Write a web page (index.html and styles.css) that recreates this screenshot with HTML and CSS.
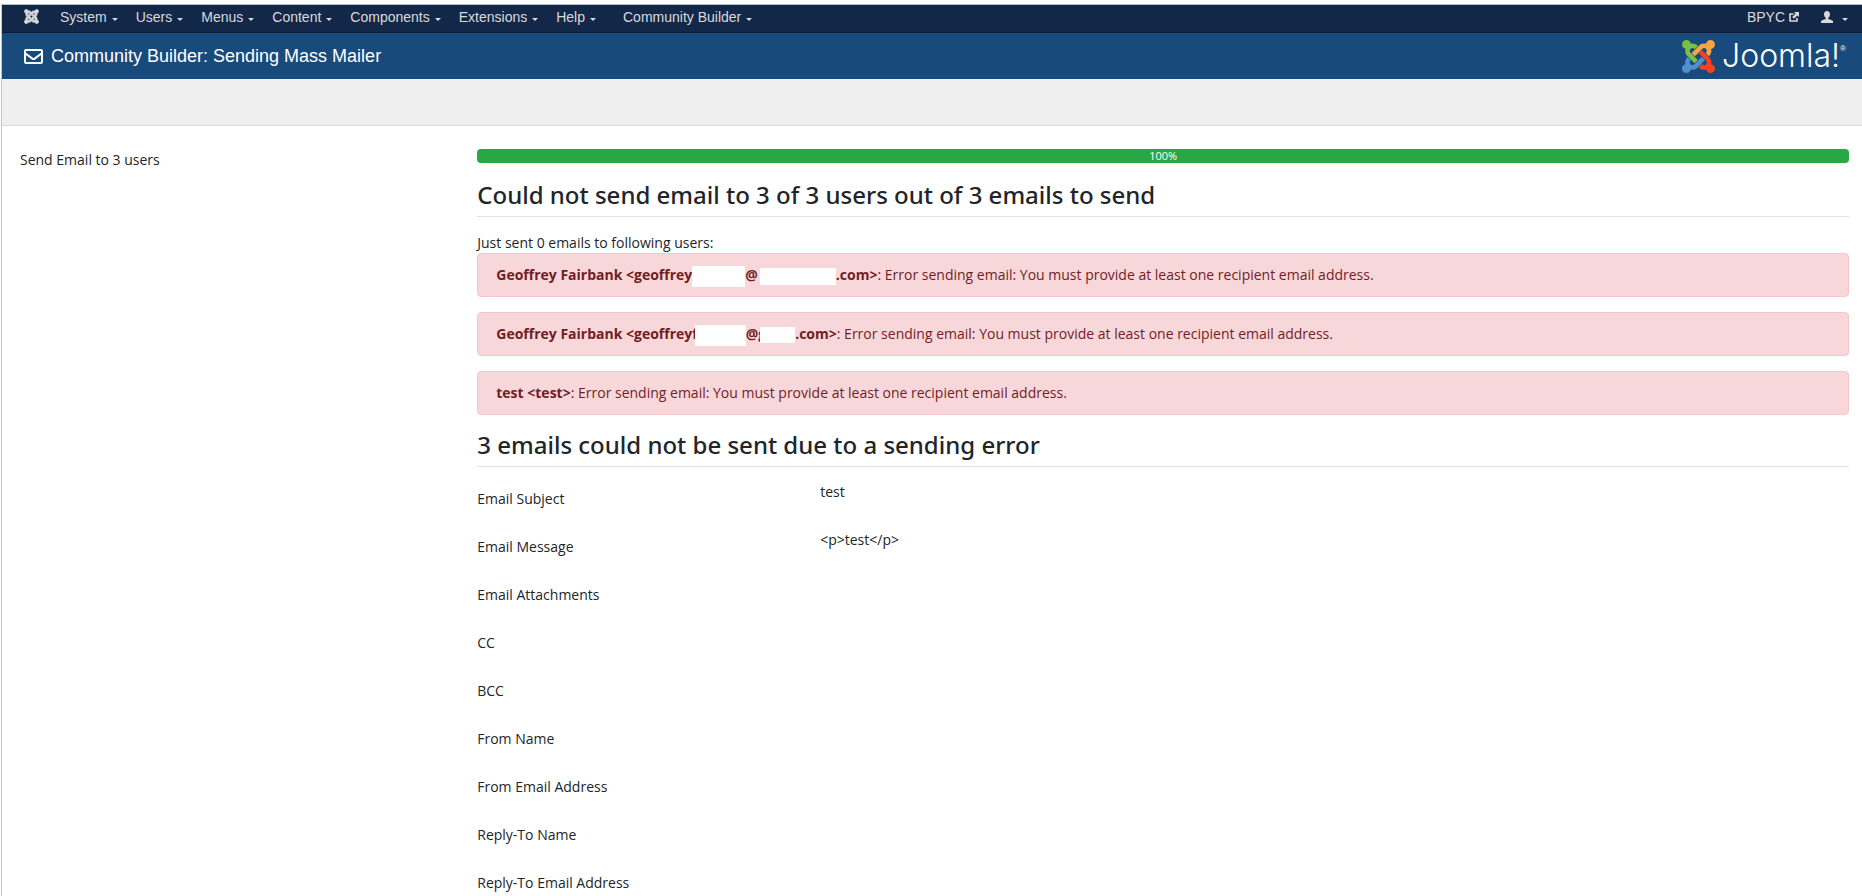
FILE: index.html
```html
<!DOCTYPE html>
<html lang="en">
<head>
<meta charset="utf-8">
<meta name="viewport" content="width=device-width, initial-scale=1">
<title>Community Builder: Sending Mass Mailer</title>
<link rel="stylesheet" href="styles.css">
</head>
<body>
<div class="frame">
  <nav class="navbar" aria-label="Administration">
    <a class="nav-brand" href="#" aria-label="Control panel">
      <svg viewBox="-12 20 472 472" aria-hidden="true"><path d="M.6 92.1C.6 58.8 27.4 32 60.4 32c30 0 54.5 21.9 59.2 50.2 32.6-7.6 67.1.6 96.5 30l-44.3 44.3c-20.5-20.5-42.6-16.3-55.4-3.5-14.3 14.3-14.3 37.9 0 52.2l99.5 99.5-44 44.3c-87.7-87.2-49.7-49.7-99.8-99.7-26.8-26.5-35-64.8-24.8-98.9C20.4 144.6.6 120.7.6 92.1zm129.5 116.4l44.3 44.3c10-10 89.7-89.7 99.7-99.8 14.3-14.3 37.6-14.3 51.9 0 12.8 12.8 17 35-3.5 55.4l44 44.3c31.2-31.2 38.5-67.6 28.9-101.2 29.2-4.1 51.9-29.2 51.9-59.5 0-33.2-26.8-60.1-59.8-60.1-30.3 0-55.4 22.5-59.5 51.6-33.8-9.9-71.7-1.5-98.3 25.1-18.3 19.1-71.1 71.5-99.6 99.9zm266.3 152.2c8.2-32.7-.9-68.5-26.3-93.9-11.8-12.2 5 4.7-99.5-99.7l-44.3 44.3 99.7 99.7c14.3 14.3 14.3 37.6 0 51.9-12.8 12.8-35 17-55.4-3.5l-44 44.3c27.6 30.2 68 38.8 102.7 28 5.5 27.4 29.7 48.1 58.9 48.1 33 0 59.8-26.8 59.8-60.1 0-30.2-22.5-55-51.6-59.1zm-84.3-53.1l-44-44.3c-87 86.4-50.4 50.4-99.7 99.8-14.3 14.3-37.6 14.3-51.9 0-13.1-13.4-16.9-35.3 3.2-55.4l-44-44.3c-30.2 30.2-38 65.2-29.5 98.3-26.7 6-46.2 29.9-46.2 58.2C0 453.2 26.8 480 59.8 480c28.6 0 52.5-19.8 58.6-46.7 32.7 8.2 68.5-.6 94.2-26 32.1-32 12.2-12.4 99.5-99.7z"/></svg>
    </a>
    <ul class="menu">
      <li><button type="button">System<span class="caret"></span></button></li>
      <li><button type="button">Users<span class="caret"></span></button></li>
      <li><button type="button">Menus<span class="caret"></span></button></li>
      <li><button type="button">Content<span class="caret"></span></button></li>
      <li><button type="button">Components<span class="caret"></span></button></li>
      <li><button type="button">Extensions<span class="caret"></span></button></li>
      <li><button type="button">Help<span class="caret"></span></button></li>
      <li class="menu-extra"><button type="button">Community Builder<span class="caret"></span></button></li>
    </ul>
    <div class="nav-right">
      <a class="site-link" href="#">BPYC
        <svg viewBox="0 0 10 10" aria-hidden="true"><path d="M4.5 2H1v7h7V6" fill="none" stroke="currentColor" stroke-width="1.6"/><path d="M5 0h5v5L8.4 3.4 5 6.8 3.2 5 6.6 1.6z"/></svg>
      </a>
      <button type="button" class="user-menu" aria-label="User menu">
        <svg viewBox="0 0 12 12" aria-hidden="true"><path d="M6 0c1.9 0 3 1.4 3 3.2 0 1.5-.7 2.9-1.7 3.6v1.1c1.9.6 4.2 1.3 4.7 2.3V12H0v-1.8c.5-1 2.8-1.7 4.7-2.3V6.8C3.7 6.1 3 4.7 3 3.2 3 1.4 4.1 0 6 0z"/></svg>
        <span class="caret"></span>
      </button>
    </div>
  </nav>

  <header class="header">
    <svg class="mail-icon" viewBox="0 0 19 15" aria-hidden="true"><rect x="1" y="1" width="17" height="13" rx="1"/><path d="M1.5 4.5 8.3 9.6q1.2.8 2.4 0L17.5 4.5"/></svg>
    <h1 class="page-title">Community Builder: Sending Mass Mailer</h1>
    <div class="logo">
      <svg viewBox="0 32 448 448" aria-hidden="true">
        <path fill="#7ac143" d="M.6 92.1C.6 58.8 27.4 32 60.4 32c30 0 54.5 21.9 59.2 50.2 32.6-7.6 67.1.6 96.5 30l-44.3 44.3c-20.5-20.5-42.6-16.3-55.4-3.5-14.3 14.3-14.3 37.9 0 52.2l99.5 99.5-44 44.3c-87.7-87.2-49.7-49.7-99.8-99.7-26.8-26.5-35-64.8-24.8-98.9C20.4 144.6.6 120.7.6 92.1z"/>
        <path fill="#f9a541" d="M130.1 208.5l44.3 44.3c10-10 89.7-89.7 99.7-99.8 14.3-14.3 37.6-14.3 51.9 0 12.8 12.8 17 35-3.5 55.4l44 44.3c31.2-31.2 38.5-67.6 28.9-101.2 29.2-4.1 51.9-29.2 51.9-59.5 0-33.2-26.8-60.1-59.8-60.1-30.3 0-55.4 22.5-59.5 51.6-33.8-9.9-71.7-1.5-98.3 25.1-18.3 19.1-71.1 71.5-99.6 99.9z"/>
        <path fill="#f44321" d="M396.4 360.7c8.2-32.7-.9-68.5-26.3-93.9-11.8-12.2 5 4.7-99.5-99.7l-44.3 44.3 99.7 99.7c14.3 14.3 14.3 37.6 0 51.9-12.8 12.8-35 17-55.4-3.5l-44 44.3c27.6 30.2 68 38.8 102.7 28 5.5 27.4 29.7 48.1 58.9 48.1 33 0 59.8-26.8 59.8-60.1 0-30.2-22.5-55-51.6-59.1z"/>
        <path fill="#5091cd" d="M312.1 307.6l-44-44.3c-87 86.4-50.4 50.4-99.7 99.8-14.3 14.3-37.6 14.3-51.9 0-13.1-13.4-16.9-35.3 3.2-55.4l-44-44.3c-30.2 30.2-38 65.2-29.5 98.3-26.7 6-46.2 29.9-46.2 58.2C0 453.2 26.8 480 59.8 480c28.6 0 52.5-19.8 58.6-46.7 32.7 8.2 68.5-.6 94.2-26 32.1-32 12.2-12.4 99.5-99.7z"/>
      </svg>
      <span class="logo-text">Joomla!</span><span class="logo-mark">®</span>
    </div>
  </header>

  <div class="subhead"></div>

  <div class="layout">
    <aside class="sidebar">Send Email to 3 users</aside>
    <main class="content">
      <div class="progress" role="progressbar" aria-label="Sending progress" aria-valuenow="100" aria-valuemin="0" aria-valuemax="100"><div class="progress-bar" style="width:100%">100%</div></div>
      <h2 class="heading">Could not send email to 3 of 3 users out of 3 emails to send</h2>
      <p class="note">Just sent 0 emails to following users:</p>
      <div class="alert" role="alert"><strong>Geoffrey Fairbank &lt;geoffrey<span class="mask mask-name"></span>@<span class="mask mask-host"></span>.com&gt;</strong>: Error sending email: You must provide at least one recipient email address.</div>
      <div class="alert" role="alert"><strong>Geoffrey Fairbank &lt;geoffreyf<span class="mask mask-name-short"></span>@g<span class="mask mask-host-short"></span>.com&gt;</strong>: Error sending email: You must provide at least one recipient email address.</div>
      <div class="alert" role="alert"><strong>test &lt;test&gt;</strong>: Error sending email: You must provide at least one recipient email address.</div>
      <h2 class="heading">3 emails could not be sent due to a sending error</h2>
      <dl class="fields">
        <div class="field"><dt>Email Subject</dt><dd>test</dd></div>
        <div class="field"><dt>Email Message</dt><dd>&lt;p&gt;test&lt;/p&gt;</dd></div>
        <div class="field"><dt>Email Attachments</dt><dd></dd></div>
        <div class="field"><dt>CC</dt><dd></dd></div>
        <div class="field"><dt>BCC</dt><dd></dd></div>
        <div class="field"><dt>From Name</dt><dd></dd></div>
        <div class="field"><dt>From Email Address</dt><dd></dd></div>
        <div class="field"><dt>Reply-To Name</dt><dd></dd></div>
        <div class="field"><dt>Reply-To Email Address</dt><dd></dd></div>
      </dl>
    </main>
  </div>
</div>
</body>
</html>
```

FILE: styles.css
```css
* { box-sizing: border-box; }

html { overflow: hidden; }

body {
  margin: 0;
  padding: 4px 0 0 1px;
  background: #fff;
  color: #212529;
  font: 14px/20px "Open Sans", "Noto Sans", sans-serif;
}

.frame {
  min-height: calc(100vh - 4px);
  border-top: 1px solid #b3bfc5;
  border-left: 1px solid #c2c6ca;
}

button {
  padding: 0;
  border: 0;
  background: none;
  color: inherit;
  font: inherit;
}

a { color: inherit; text-decoration: none; }

/* Top menu */
.navbar {
  display: flex;
  align-items: center;
  height: 28px;
  padding: 0 14px 4px 22px;
  border-bottom: 1px solid #0d1a31;
  background: #132849;
  color: #d9d9d9;
  font: 14px/20px "Liberation Sans", Arial, sans-serif;
}

.nav-brand { display: flex; margin-right: 21px; }

.nav-brand svg {
  width: 15px;
  height: 15px;
  fill: currentColor;
  stroke: currentColor;
  stroke-width: 24;
}

.menu {
  display: flex;
  gap: 18px;
  margin: 0;
  padding: 0;
  list-style: none;
}

.menu-extra { margin-left: 9px; }

.menu button { display: flex; align-items: center; }

.caret {
  margin: 5px 0 0 5px;
  border: 3px solid transparent;
  border-top-color: currentColor;
  border-bottom: 0;
}

.nav-right { display: flex; gap: 22px; margin-left: auto; }
.site-link { display: flex; align-items: center; gap: 4px; }
.site-link svg { width: 10px; height: 10px; fill: currentColor; }
.user-menu { display: flex; align-items: center; gap: 4px; }
.user-menu svg { width: 12px; height: 12px; fill: currentColor; }

/* Title bar */
.header {
  display: flex;
  align-items: center;
  height: 46px;
  padding: 0 16px 0 22px;
  background: #194a7c;
  color: #fff;
}

.mail-icon {
  width: 19px;
  height: 15px;
  fill: none;
  stroke: currentColor;
  stroke-width: 2;
}

.page-title {
  margin: 0 0 0 8px;
  font: 18px/26px "Liberation Sans", Arial, sans-serif;
}

.logo { display: flex; align-items: center; margin-left: auto; }
.logo svg { width: 33px; height: 33px; }

.logo-text {
  margin-left: 7px;
  font: 300 32px/32px Inter, "Liberation Sans", sans-serif;
}

.logo-mark {
  align-self: flex-start;
  font: 8px/18px "Liberation Sans", Arial, sans-serif;
}

.subhead {
  height: 47px;
  border-bottom: 1px solid #dbdbdb;
  background: #efefef;
}

/* Body columns */
.layout {
  display: grid;
  grid-template-columns: 1fr 3fr;
  padding: 23px 13px 0 18px;
}

.sidebar { padding-top: 1px; }

.progress {
  overflow: hidden;
  margin-bottom: 14px;
  border-radius: 4px;
  background: #e9ecef;
}

.progress-bar {
  background: #28a745;
  color: #fff;
  font: 11px/14px "Open Sans", "Noto Sans", sans-serif;
  text-align: center;
}

.heading {
  margin: 12px 0 14px;
  padding: 1px 0 4px;
  border-bottom: 1px solid #dee2e6;
  font: 500 24px/34px "Noto Sans", sans-serif;
}

.note { margin: 0; padding-top: 2px; }

.alert {
  margin-bottom: 15px;
  padding: 11px 18px;
  border: 1px solid #f5c6cb;
  border-radius: 4px;
  background: #f8d7da;
  color: #721c24;
}

.alert:last-of-type { margin-bottom: 12px; }

/* Blanked-out parts of the addresses */
.mask {
  display: inline-block;
  height: 21px;
  margin: -2px 0;
  background: #fff;
  vertical-align: middle;
}

.mask-name { width: 53px; }
.mask-host { width: 76px; height: 17px; margin-left: 2px; }
.mask-name-short { width: 51px; margin-left: -3px; }
.mask-host-short { width: 35px; height: 16px; margin-left: -6px; }

.fields { margin: 0; }

.field {
  display: grid;
  grid-template-columns: 1fr 3fr;
  height: 48px;
}

.field dt { padding-top: 8px; }
.field dd { margin: 0; padding-top: 1px; }
```
